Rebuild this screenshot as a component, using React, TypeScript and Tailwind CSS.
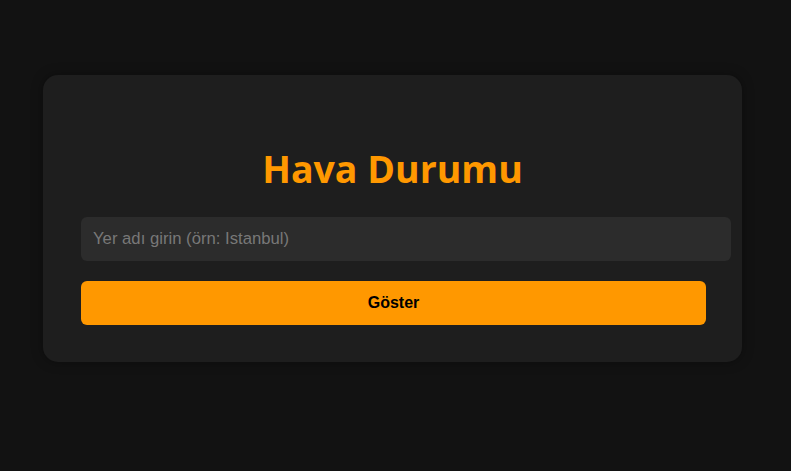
export default function App() {
  return (
    <div className="min-h-[471px] w-full bg-[#121212] pt-[75px] pl-[43px]" style={{ fontFamily: '"Liberation Sans", Arial, sans-serif' }}>
      <div className="w-[699px] h-[287px] rounded-[15px] bg-[#1e1e1e] shadow-[0_0_12px_rgba(0,0,0,0.35)] px-[38px] pt-[72px]">
        <h1 className="text-center text-[37.5px] leading-[44px] font-bold text-[#ff9800]" style={{ fontFamily: '"Open Sans", "Noto Sans", sans-serif' }}>
          Hava Durumu
        </h1>
        <input
          className="mt-[26px] block w-[650px] h-[44px] rounded-[6px] bg-[#2c2c2c] px-[12px] text-[16.7px] text-white placeholder:text-[#787878] outline-none"
          placeholder="Yer adı girin (örn: Istanbul)"
        />
        <button className="mt-[20px] block w-[625px] h-[44px] rounded-[6px] bg-[#ff9800] text-[16px] font-bold text-black">
          Göster
        </button>
      </div>
    </div>
  );
}
